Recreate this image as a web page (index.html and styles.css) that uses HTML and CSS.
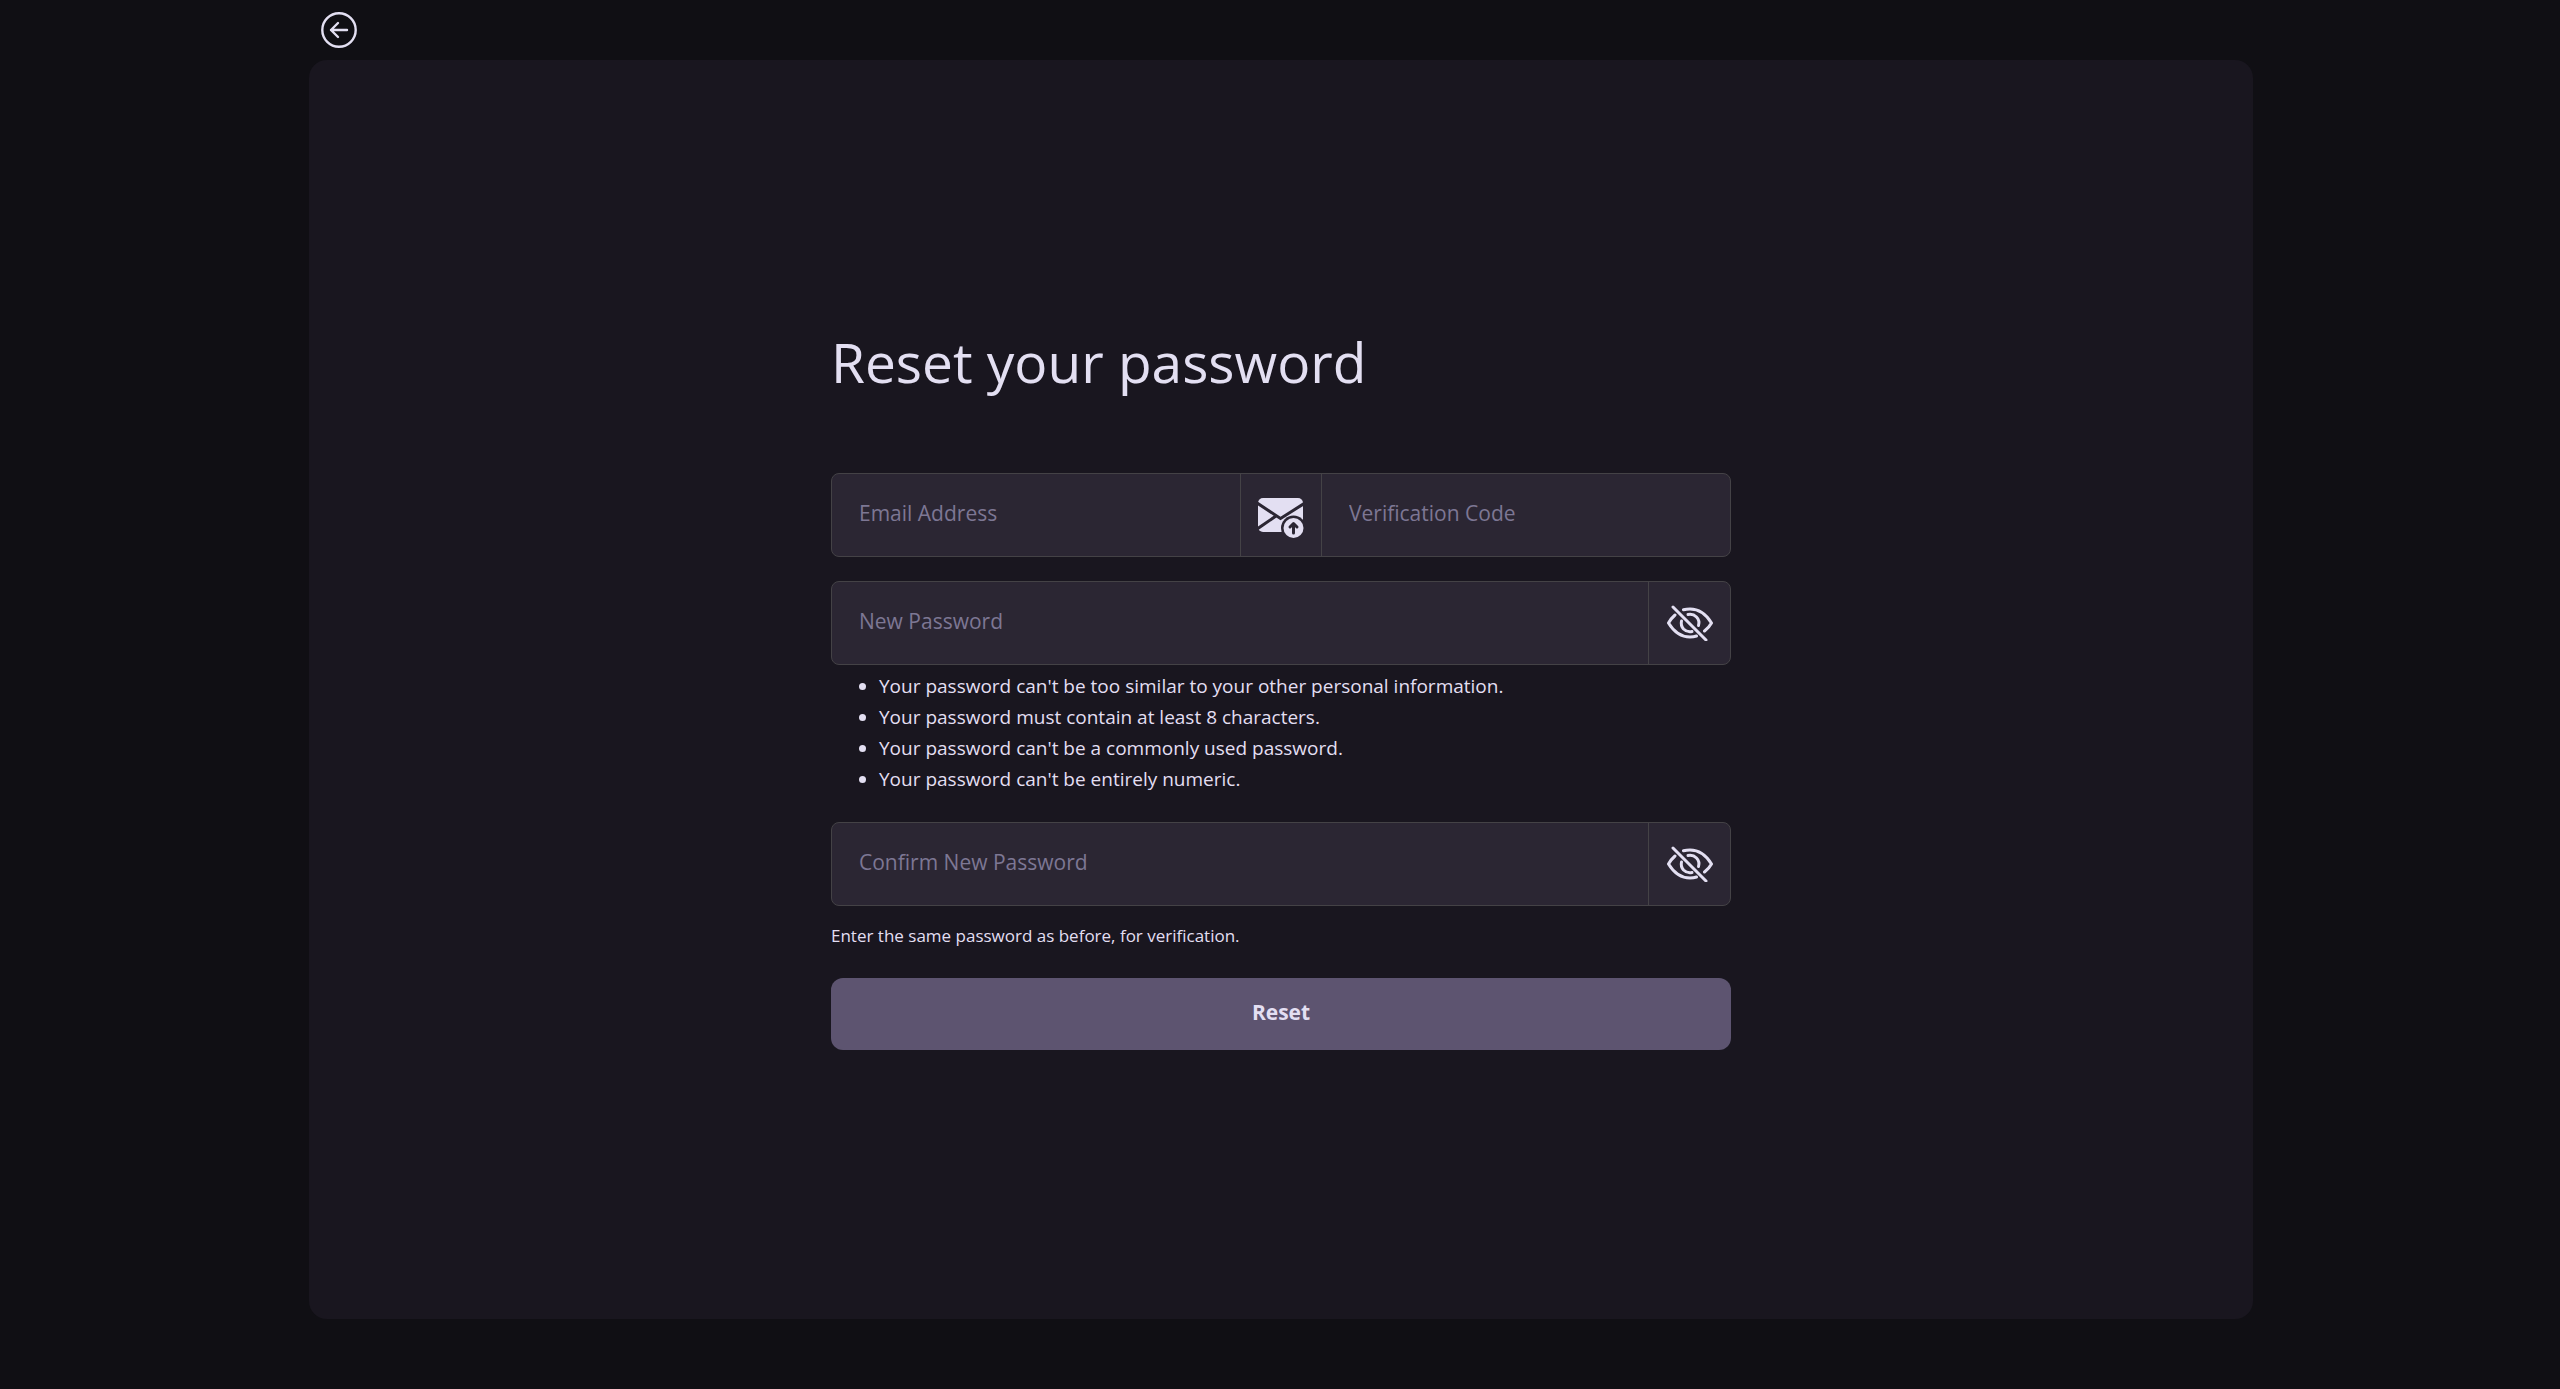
FILE: index.html
```html
<!DOCTYPE html>
<html lang="en">
<head>
<meta charset="utf-8">
<meta name="viewport" content="width=device-width, initial-scale=1">
<title>Reset your password</title>
<link rel="stylesheet" href="styles.css">
</head>
<body>
<div class="page">
  <header class="topbar">
    <a class="back" href="#" aria-label="Back">
      <svg viewBox="0 0 36 36" width="36" height="36" fill="none" stroke="currentColor" stroke-width="2.4" stroke-linecap="round" stroke-linejoin="round">
        <circle cx="18" cy="18" r="16.7"/>
        <path d="M26 18H10M17 11l-7 7 7 7"/>
      </svg>
    </a>
  </header>
  <main class="panel">
    <form class="form">
      <h1 class="title">Reset your password</h1>

      <div class="row">
        <input class="field" type="email" placeholder="Email Address" aria-label="Email Address">
        <button class="icon-button" type="button" aria-label="Send verification code">
          <svg viewBox="0 -6 46 46" width="46" height="46">
            <defs>
              <mask id="envelope">
                <rect width="46" height="42" fill="#fff"/>
                <path d="M-1 5L22.5 20.5 47 5M-1 31L18 18" fill="none" stroke="#000" stroke-width="3"/>
                <circle cx="35.5" cy="30" r="12.5" fill="#000"/>
              </mask>
            </defs>
            <rect x="0" y="0" width="45" height="34" rx="5" fill="currentColor" mask="url(#envelope)"/>
            <circle cx="35.5" cy="30" r="10" fill="currentColor"/>
            <path class="arrow" d="M35.5 35V26M32 29l3.5-3.500 3.500 3.500"/>
          </svg>
        </button>
        <input class="field" type="text" placeholder="Verification Code" aria-label="Verification Code">
      </div>

      <div class="row">
        <input class="field" type="password" placeholder="New Password" aria-label="New Password" aria-describedby="rules">
        <button class="icon-button" type="button" aria-label="Show password">
          <svg viewBox="0 0 46 36" width="46" height="36" fill="none" stroke="currentColor" stroke-width="3" stroke-linecap="round" stroke-linejoin="round">
            <path d="M6 2L39 35"/>
            <path d="M8 10Q4 13.5 1.5 18C7 27 15 32 23 32Q26.5 32 29.5 31"/>
            <path d="M16.5 4.8Q19.5 4 23 4C31 4 39 9 44.5 18Q42 22.5 37.5 26"/>
            <path d="M14.5 16Q13.5 20.5 16.5 24 20 27.5 25 26.5"/>
            <path d="M21 9.5Q26 8.5 29.5 12 33 15.5 31.5 20.5"/>
          </svg>
        </button>
      </div>
      <ul class="rules" id="rules">
        <li>Your password can't be too similar to your other personal information.</li>
        <li>Your password must contain at least 8 characters.</li>
        <li>Your password can't be a commonly used password.</li>
        <li>Your password can't be entirely numeric.</li>
      </ul>

      <div class="row">
        <input class="field" type="password" placeholder="Confirm New Password" aria-label="Confirm New Password" aria-describedby="hint">
        <button class="icon-button" type="button" aria-label="Show password">
          <svg viewBox="0 0 46 36" width="46" height="36" fill="none" stroke="currentColor" stroke-width="3" stroke-linecap="round" stroke-linejoin="round">
            <path d="M6 2L39 35"/>
            <path d="M8 10Q4 13.5 1.5 18C7 27 15 32 23 32Q26.5 32 29.5 31"/>
            <path d="M16.5 4.8Q19.5 4 23 4C31 4 39 9 44.5 18Q42 22.5 37.5 26"/>
            <path d="M14.5 16Q13.5 20.5 16.5 24 20 27.5 25 26.5"/>
            <path d="M21 9.5Q26 8.5 29.5 12 33 15.5 31.5 20.5"/>
          </svg>
        </button>
      </div>
      <p class="hint" id="hint">Enter the same password as before, for verification.</p>

      <button class="submit" type="submit">Reset</button>
    </form>
  </main>
</div>
</body>
</html>
```
FILE: styles.css
```css
* {
  box-sizing: border-box;
}

body {
  margin: 0;
  background: #100f14;
  color: #e3dff2;
  font-family: "Open Sans", "Noto Sans", sans-serif;
}

.page {
  display: flex;
  flex-direction: column;
  width: 76%;
  min-height: 100vh;
  margin: 0 auto;
  padding: 0 0 70px 2px;
}

.topbar {
  display: flex;
  align-items: center;
  height: 60px;
  padding: 0 12px;
}

.back {
  display: flex;
  color: inherit;
}

.panel {
  display: flex;
  flex: 1;
  justify-content: center;
  align-items: center;
  padding-bottom: 11px;
  border-radius: 18px;
  background: #19161f;
}

.form {
  display: flex;
  flex-direction: column;
  width: 100%;
  max-width: 900px;
}

.title {
  margin: 0 0 67px;
  font-size: 55px;
  font-weight: 400;
  line-height: 88px;
}

.row {
  display: flex;
  height: 84px;
  margin-bottom: 24px;
  overflow: hidden;
  border: 1px solid #444246;
  border-radius: 8px;
  background: #2b2633;
}

.field {
  flex: 1;
  min-width: 0;
  padding: 0 27px 4px;
  border: 0;
  background: none;
  color: inherit;
  font: inherit;
  font-size: 21px;
}

.field::placeholder {
  color: #7d7794;
  opacity: 1;
}

.icon-button {
  display: flex;
  flex: none;
  justify-content: center;
  align-items: center;
  width: 82px;
  padding: 0;
  border: 0;
  border-left: 1px solid #444246;
  background: none;
  color: inherit;
}

.icon-button:not(:last-child) {
  border-right: 1px solid #444246;
}

.arrow {
  fill: none;
  stroke: #2b2633;
  stroke-width: 3px;
  stroke-linecap: round;
  stroke-linejoin: round;
}

.rules {
  margin: -18px 0 27px;
  padding-left: 48px;
  font-size: 19px;
  line-height: 31px;
}

.hint {
  margin: -6px 0 30px;
  font-size: 17px;
  line-height: 24px;
}

.submit {
  height: 72px;
  padding: 0 0 4px;
  border: 0;
  border-radius: 12px;
  background: #5d5470;
  color: inherit;
  font: inherit;
  font-size: 21px;
  font-weight: 700;
}
```
